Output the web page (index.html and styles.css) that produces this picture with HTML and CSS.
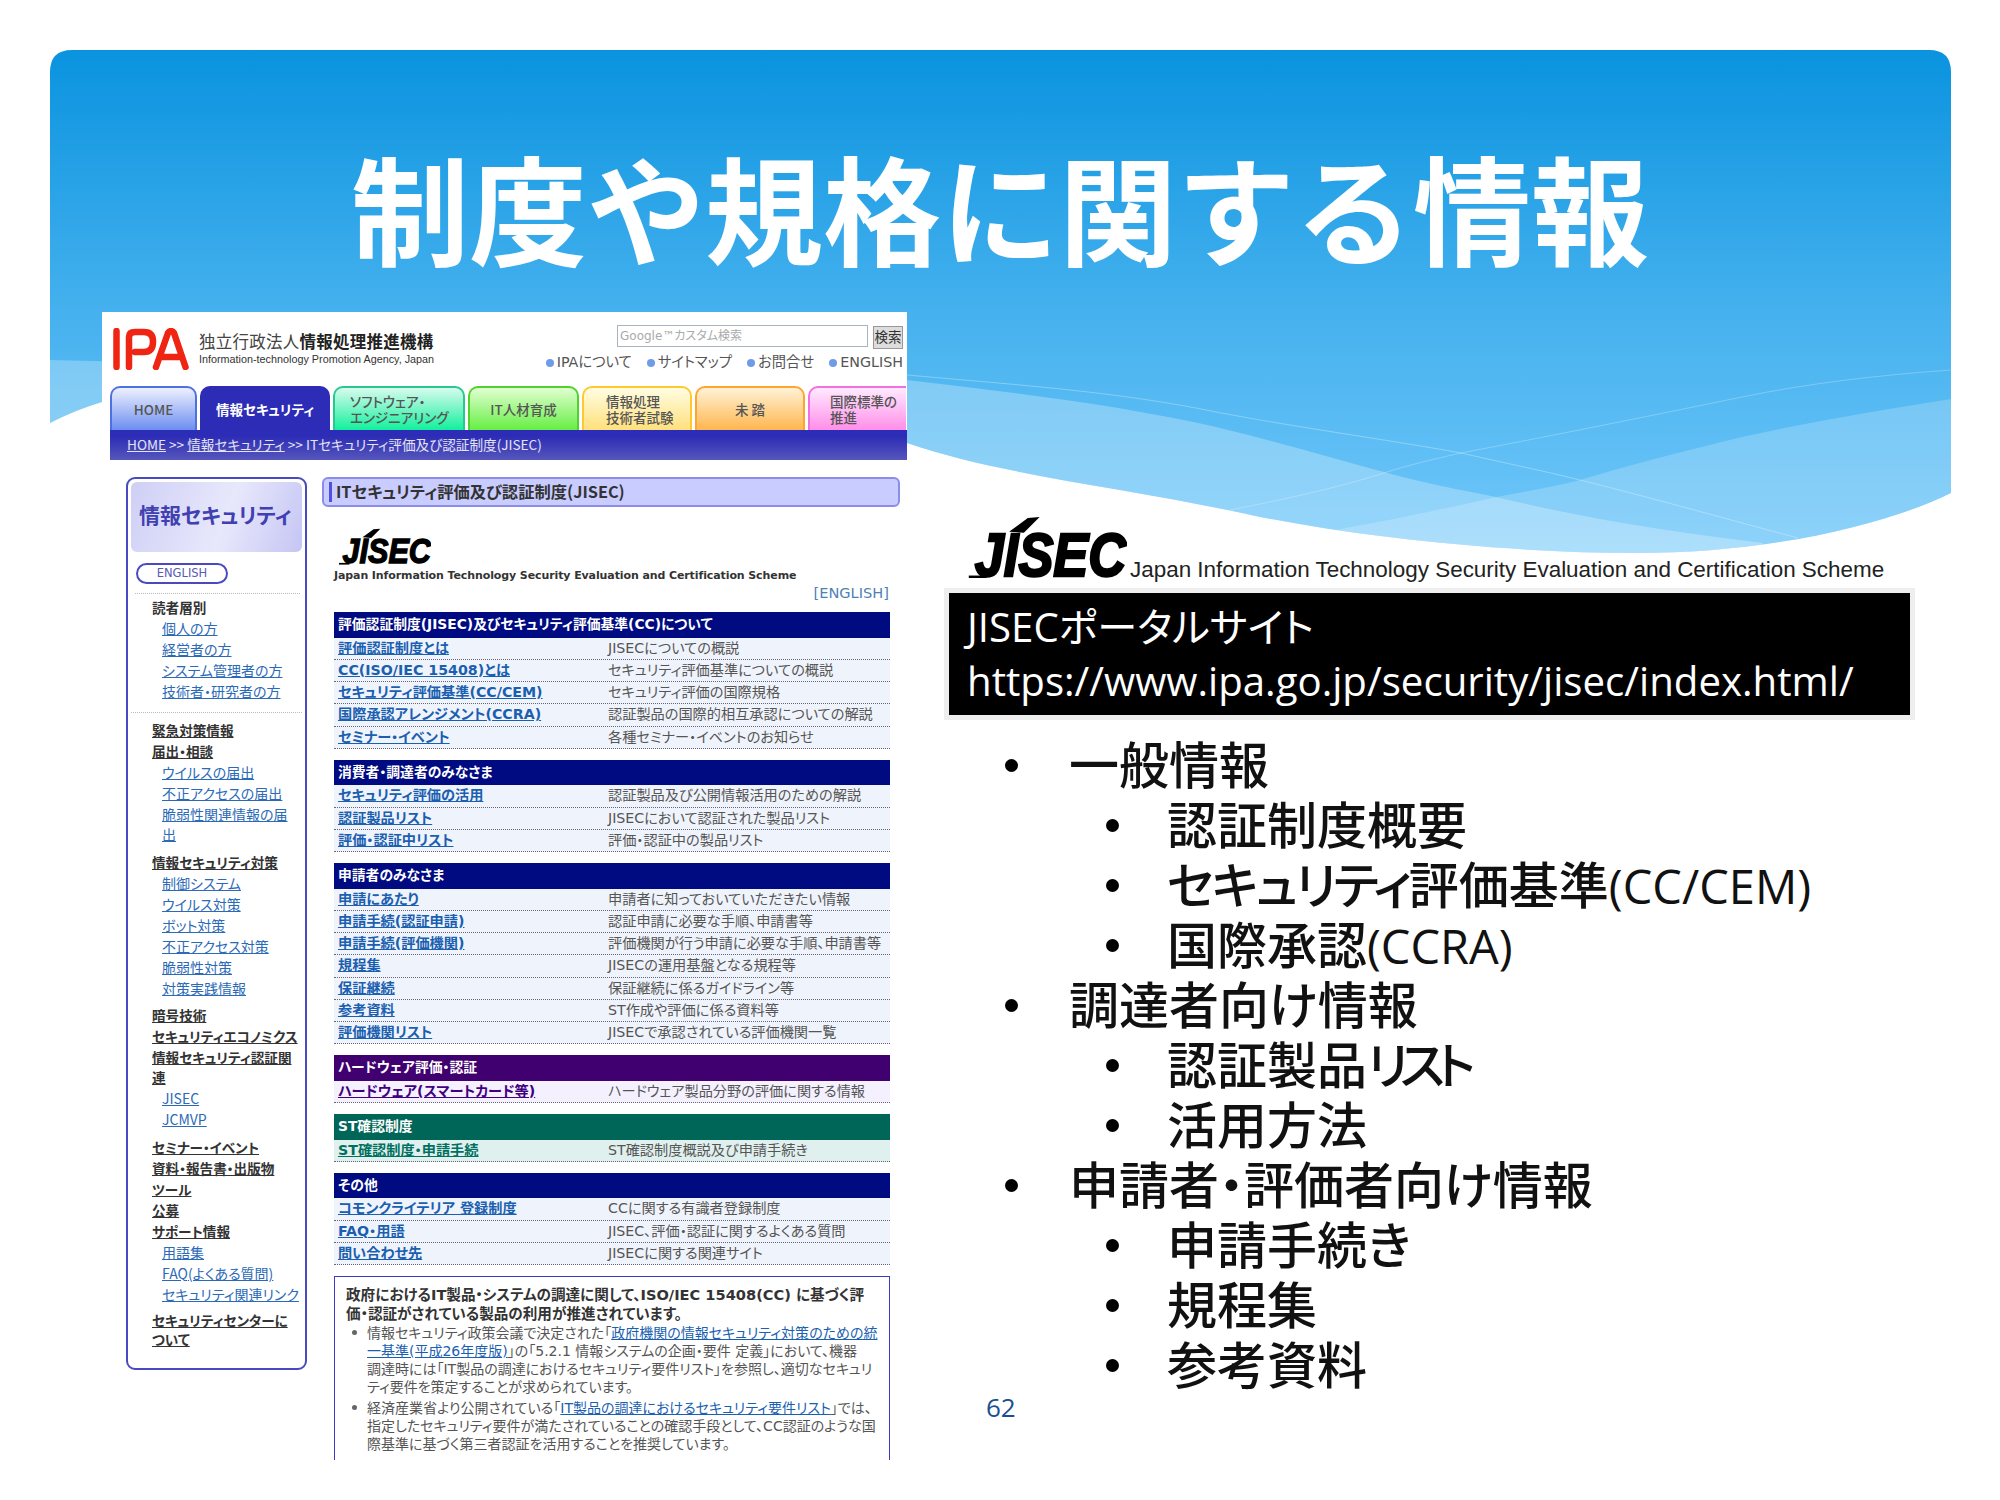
FILE: index.html
```html
<!DOCTYPE html>
<html lang="ja">
<head>
<meta charset="utf-8">
<title>制度や規格に関する情報</title>
<link rel="stylesheet" href="styles.css">
</head>
<body>
<div class="slide">
  <svg class="slide-bg" viewBox="0 0 2000 1500" width="2000" height="1500" aria-hidden="true">
    <defs>
      <linearGradient id="sky" gradientUnits="userSpaceOnUse" x1="0" y1="50" x2="0" y2="553">
        <stop offset="0" stop-color="#0a93df"/>
        <stop offset="0.52" stop-color="#45b1ee"/>
        <stop offset="1" stop-color="#72c8fa"/>
      </linearGradient>
      <clipPath id="wave"><path d="M50 72 Q50 50 72 50 H1929 Q1951 50 1951 72 V493 C1880 528 1760 553 1637 553 C1500 553 1340 535 1237 512 C1120 487 1000 475 907 443 C700 370 320 300 102 402 Q75 410 50 423 Z"/></clipPath>
    </defs>
    <g clip-path="url(#wave)">
      <rect x="50" y="50" width="1901" height="510" fill="url(#sky)"/>
      <path d="M50 360 L907 380 C1010 392 1120 405 1216 427 C1290 445 1340 460 1384 472 C1420 482 1460 490 1496 497 C1590 520 1680 533 1763 543 V600 H50 Z" fill="#fff" opacity="0.27"/>
      <path d="M1951 399 C1880 410 1810 422 1742 437 C1680 452 1630 465 1580 480 C1550 488 1520 492 1496 497 C1440 510 1390 520 1335 530 C1280 545 1230 560 1180 580 H1951 Z" fill="#fff" opacity="0.2"/>
      <path d="M907 375 C1020 385 1120 392 1216 412 C1300 428 1390 440 1461 453 C1500 462 1540 470 1580 480 C1660 500 1730 520 1798 538" fill="none" stroke="#fff" stroke-opacity="0.3"/>
      <path d="M1951 370 C1880 375 1810 383 1742 397 C1640 418 1540 438 1461 453 C1430 460 1405 466 1384 473 C1330 490 1280 500 1230 510" fill="none" stroke="#fff" stroke-opacity="0.25"/>
    </g>
  </svg>

  <h1 class="slide-title">制度や規格に関する情報</h1>

  <div class="slide-body">
    <div class="site">
      <header class="site-head">
        <div class="brand">
          <svg class="ipa-logo" viewBox="0 0 76 42" width="76" height="42" role="img" aria-label="IPA">
            <path d="M3.5 3V39M16 39V9Q16 4 22 4H31Q40 4 40 13.500Q40 24 31 24H22" fill="none" stroke="#f02412" stroke-width="6.500" stroke-linecap="round"/>
            <path d="M43 39L55 5Q58 1 61 5L72.500 39M50 29H66" fill="none" stroke="#f02412" stroke-width="6.500" stroke-linecap="round"/>
          </svg>
          <div class="brand-text">
            <div class="brand-ja">独立行政法人<b>情報処理推進機構</b></div>
            <div class="brand-en">Information-technology Promotion Agency, Japan</div>
          </div>
        </div>
        <div class="head-tools">
          <div class="search"><span class="search-box">Google™カスタム検索</span><span class="search-btn">検索</span></div>
          <ul class="util-links">
            <li>IPAについて</li><li>サイトマップ</li><li>お問合せ</li><li>ENGLISH</li>
          </ul>
        </div>
      </header>

      <nav class="tabs">
        <a class="tab tab-home">HOME</a>
        <a class="tab tab-sec">情報セキュリティ</a>
        <a class="tab tab-soft">ソフトウェア・<br>エンジニアリング</a>
        <a class="tab tab-it">IT人材育成</a>
        <a class="tab tab-exam">情報処理<br>技術者試験</a>
        <a class="tab tab-mito">未 踏</a>
        <a class="tab tab-intl">国際標準の<br>推進</a>
      </nav>
      <div class="crumbs"><u>HOME</u> &gt;&gt; <u>情報セキュリティ</u> &gt;&gt; ITセキュリティ評価及び認証制度(JISEC)</div>

      <div class="site-main">
        <aside class="side">
          <div class="side-title">情報セキュリティ</div>
          <div class="pill">ENGLISH</div>
          <div class="dots dots-a"></div>
          <div class="group">
            <div class="h h-plain">読者層別</div>
            <a class="l">個人の方</a>
            <a class="l">経営者の方</a>
            <a class="l">システム管理者の方</a>
            <a class="l">技術者・研究者の方</a>
          </div>
          <div class="dots dots-b"></div>
          <div class="group">
            <a class="h">緊急対策情報</a>
            <a class="h">届出・相談</a>
            <a class="l">ウイルスの届出</a>
            <a class="l">不正アクセスの届出</a>
            <a class="l">脆弱性関連情報の届<br>出</a>
          </div>
          <div class="group">
            <a class="h">情報セキュリティ対策</a>
            <a class="l">制御システム</a>
            <a class="l">ウイルス対策</a>
            <a class="l">ボット対策</a>
            <a class="l">不正アクセス対策</a>
            <a class="l">脆弱性対策</a>
            <a class="l">対策実践情報</a>
          </div>
          <div class="group">
            <a class="h">暗号技術</a>
            <a class="h">セキュリティエコノミクス</a>
            <a class="h">情報セキュリティ認証関<br>連</a>
            <a class="l">JISEC</a>
            <a class="l">JCMVP</a>
          </div>
          <div class="group">
            <a class="h">セミナー・イベント</a>
            <a class="h">資料・報告書・出版物</a>
            <a class="h">ツール</a>
            <a class="h">公募</a>
            <a class="h">サポート情報</a>
            <a class="l">用語集</a>
            <a class="l">FAQ(よくある質問)</a>
            <a class="l">セキュリティ関連リンク</a>
          </div>
          <div class="group">
            <a class="h h-wrap">セキュリティセンターに<br>ついて</a>
          </div>
        </aside>

        <main class="content">
          <h2 class="content-title">ITセキュリティ評価及び認証制度(JISEC)</h2>
          <div class="content-inner">
            <svg class="jisec-small" viewBox="0 0 160 62" width="92" height="37" role="img" aria-label="JISEC">
              <path d="M41 15L60 1L72 0L56 16Z" fill="#000"/>
              <path d="M0 61H18" stroke="#000" stroke-width="3"/>
              <text x="6" y="60" class="jisec-mark" textLength="154" lengthAdjust="spacingAndGlyphs">JISEC</text>
            </svg>
            <div class="tagline">Japan Information Technology Security Evaluation and Certification Scheme</div>
            <div class="english-link">[ENGLISH]</div>

            <section class="block">
              <h3>評価認証制度(JISEC)及びセキュリティ評価基準(CC)について</h3>
              <div class="row"><a>評価認証制度とは</a><span>JISECについての概説</span></div>
              <div class="row"><a>CC(ISO/IEC 15408)とは</a><span>セキュリティ評価基準についての概説</span></div>
              <div class="row"><a>セキュリティ評価基準(CC/CEM)</a><span>セキュリティ評価の国際規格</span></div>
              <div class="row"><a>国際承認アレンジメント(CCRA)</a><span>認証製品の国際的相互承認についての解説</span></div>
              <div class="row"><a>セミナー・イベント</a><span>各種セミナー・イベントのお知らせ</span></div>
            </section>
            <section class="block">
              <h3>消費者・調達者のみなさま</h3>
              <div class="row"><a>セキュリティ評価の活用</a><span>認証製品及び公開情報活用のための解説</span></div>
              <div class="row"><a>認証製品リスト</a><span>JISECにおいて認証された製品リスト</span></div>
              <div class="row"><a>評価・認証中リスト</a><span>評価・認証中の製品リスト</span></div>
            </section>
            <section class="block">
              <h3>申請者のみなさま</h3>
              <div class="row"><a>申請にあたり</a><span>申請者に知っておいていただきたい情報</span></div>
              <div class="row"><a>申請手続(認証申請)</a><span>認証申請に必要な手順、申請書等</span></div>
              <div class="row"><a>申請手続(評価機関)</a><span>評価機関が行う申請に必要な手順、申請書等</span></div>
              <div class="row"><a>規程集</a><span>JISECの運用基盤となる規程等</span></div>
              <div class="row"><a>保証継続</a><span>保証継続に係るガイドライン等</span></div>
              <div class="row"><a>参考資料</a><span>ST作成や評価に係る資料等</span></div>
              <div class="row"><a>評価機関リスト</a><span>JISECで承認されている評価機関一覧</span></div>
            </section>
            <section class="block block-hw">
              <h3>ハードウェア評価・認証</h3>
              <div class="row"><a>ハードウェア(スマートカード等)</a><span>ハードウェア製品分野の評価に関する情報</span></div>
            </section>
            <section class="block block-st">
              <h3>ST確認制度</h3>
              <div class="row"><a>ST確認制度・申請手続</a><span>ST確認制度概説及び申請手続き</span></div>
            </section>
            <section class="block">
              <h3>その他</h3>
              <div class="row"><a>コモンクライテリア 登録制度</a><span>CCに関する有識者登録制度</span></div>
              <div class="row"><a>FAQ・用語</a><span>JISEC、評価・認証に関するよくある質問</span></div>
              <div class="row"><a>問い合わせ先</a><span>JISECに関する関連サイト</span></div>
            </section>

            <section class="notice">
              <p class="notice-lead">政府におけるIT製品・システムの調達に関して、ISO/IEC 15408(CC) に基づく評<br>価・認証がされている製品の利用が推進されています。</p>
              <ul>
                <li>情報セキュリティ政策会議で決定された「<a>政府機関の情報セキュリティ対策のための統<br>一基準(平成26年度版)</a>」の「5.2.1 情報システムの企画・要件 定義」において、機器<br>調達時には「IT製品の調達におけるセキュリティ要件リスト」を参照し、適切なセキュリ<br>ティ要件を策定することが求められています。</li>
                <li>経済産業省より公開されている「<a>IT製品の調達におけるセキュリティ要件リスト</a>」では、<br>指定したセキュリティ要件が満たされていることの確認手段として、CC認証のような国<br>際基準に基づく第三者認証を活用することを推奨しています。</li>
              </ul>
            </section>
          </div>
        </main>
      </div>
    </div>

    <div class="right">
      <div class="jisec-line">
        <svg class="jisec-big" viewBox="0 0 160 62" width="159" height="61" role="img" aria-label="JISEC">
          <path d="M41 15L60 1L72 0L56 16Z" fill="#000"/>
          <path d="M0 61H18" stroke="#000" stroke-width="3"/>
          <text x="6" y="60" class="jisec-mark" textLength="154" lengthAdjust="spacingAndGlyphs">JISEC</text>
        </svg>
        <span class="jisec-name">Japan Information Technology Security Evaluation and Certification Scheme</span>
      </div>
      <div class="portal">
        <div class="portal-line">JISECポータルサイト</div>
        <div class="portal-line">https://www.ipa.go.jp/security/jisec/index.html/</div>
      </div>
      <ul class="topics">
        <li class="t1">一般情報</li>
        <li class="t2">認証制度概要</li>
        <li class="t2"><span class="tight-a">セキュリティ</span>評価基準<span class="latin">(CC/CEM)</span></li>
        <li class="t2">国際承認<span class="latin">(CCRA)</span></li>
        <li class="t1">調達者向け情報</li>
        <li class="t2">認証製品<span class="tight-b">リスト</span></li>
        <li class="t2">活用方法</li>
        <li class="t1">申請者・評価者向け情報</li>
        <li class="t2">申請手続き</li>
        <li class="t2">規程集</li>
        <li class="t2">参考資料</li>
      </ul>
      <div class="page-no">62</div>
    </div>
  </div>
</div>
</body>
</html>
```

FILE: styles.css
```css
* { box-sizing: border-box; }
html, body { margin: 0; padding: 0; background: #fff; }
body { font-family: "Noto Sans CJK JP", sans-serif; }
h1, h2, h3, p, ul { margin: 0; padding: 0; }
ul { list-style: none; }

.slide { position: relative; width: 2000px; height: 1500px; overflow: hidden; background: #fff; }
.slide-bg { position: absolute; left: 0; top: 0; }

.slide-title {
  position: relative;
  height: 312px;
  padding-top: 126px;
  font-size: 118px;
  line-height: 160px;
  font-weight: 700;
  color: #fff;
  text-align: center;
  white-space: nowrap;
}

.slide-body { position: relative; display: flex; align-items: flex-start; }

/* ---- embedded web page ---- */
.site {
  width: 805px;
  height: 1148px;
  margin-left: 102px;
  overflow: hidden;
  background: #fff;
  font-family: "DejaVu Sans", "Noto Sans CJK JP", sans-serif;
  font-feature-settings: "palt";
  font-size: 14.2px;
  color: #444;
}
.site-head { display: flex; justify-content: space-between; height: 74px; padding: 13px 4px 0 11px; }
.brand { display: flex; gap: 10px; align-items: flex-start; padding-top: 3px; }
.ipa-logo { display: block; }
.brand-text { padding-top: 2px; }
.brand-ja { font-family: "Noto Sans CJK JP", sans-serif; font-size: 16.5px; line-height: 23px; color: #444; white-space: nowrap; letter-spacing: .25px; }
.brand-ja b { color: #222; }
.brand-en { font-family: "Liberation Sans", sans-serif; font-size: 10.8px; line-height: 13px; color: #333; white-space: nowrap; }
.head-tools { display: flex; flex-direction: column; align-items: flex-end; }
.search { display: flex; gap: 5px; height: 23px; }
.search-box { width: 251px; height: 22px; border: 1px solid #a7b5c2; padding-left: 2px; font-size: 12px; line-height: 20px; color: #aaa; }
.search-btn { width: 30px; height: 23px; margin-top: 1px; background: #ddd; border: 1px solid #999; font-size: 13.5px; line-height: 21px; text-align: center; color: #333; white-space: nowrap; }
.util-links { display: flex; gap: 15px; margin-top: 4px; font-size: 14.3px; line-height: 20px; color: #555; white-space: nowrap; }
.util-links li::before { content: ""; display: inline-block; width: 8px; height: 8px; margin-right: 3px; border-radius: 50%; background: #6f9be8; }

.tabs { display: flex; gap: 3px; height: 44px; margin-left: 8px; }
.tab {
  display: flex; align-items: center; justify-content: center;
  height: 44px;
  border: 2px solid; border-bottom: 0; border-radius: 10px 10px 0 0;
  font-family: "Noto Sans CJK JP", sans-serif;
  font-size: 13.5px; line-height: 16px; font-weight: 500; color: #555; white-space: nowrap;
}
.tab-home { width: 87px; border-color: #4f70e0; background: linear-gradient(#eef0ff, #6c8ef0); }
.tab-sec { width: 130px; border-color: #2c2cb6; background: #2c2cb6; color: #fff; font-weight: 700; }
.tab-soft { width: 132px; border-color: #28c890; background: linear-gradient(#d8fbee, #12f09c); justify-content: flex-start; padding-left: 15px; }
.tab-it { width: 111px; border-color: #52d030; background: linear-gradient(#e0ffd0, #66ee44); }
.tab-exam { width: 110px; border-color: #ffc830; background: linear-gradient(#fffde2, #ffe07c); justify-content: flex-start; padding-left: 22px; }
.tab-mito { width: 110px; border-color: #ffa52e; background: linear-gradient(#fff2d6, #ffb64e); }
.tab-intl { width: 98px; flex: none; border-color: #f070e0; border-right: 0; border-radius: 10px 0 0 0; background: linear-gradient(#ffeaff, #ff8ee8); justify-content: flex-start; padding-left: 20px; }

.crumbs {
  height: 30px; margin-left: 8px; padding-left: 17px;
  background: linear-gradient(#2c2cb6 20%, #5656bc);
  font-family: "Noto Sans CJK JP", sans-serif;
  font-size: 13.6px; line-height: 28px; color: #e4e4f4; white-space: nowrap;
}

.site-main { display: flex; gap: 15px; margin-top: 17px; padding-left: 24px; }

.side {
  flex: none; width: 181px; height: 893px;
  padding: 3px;
  border: 2px solid #4a4ac0; border-radius: 9px;
  font-family: "Noto Sans CJK JP", sans-serif;
  font-size: 14px;
}
.side-title {
  height: 70px; padding-left: 8px;
  border-radius: 6px;
  background: linear-gradient(110deg, #cfcff6, #e8e8fc 55%, #c5c5f4);
  font-size: 21px; font-weight: 700; line-height: 64px; color: #4040b0; white-space: nowrap;
}
.pill {
  width: 92px; height: 21px; margin: 11px 0 0 5px;
  border: 2px solid #4a4ac0; border-radius: 11px;
  font-family: "DejaVu Sans", sans-serif;
  font-size: 11.5px; line-height: 17px; text-align: center; color: #5a5ab8;
}
.dots { height: 0; border-top: 1px dotted #bbb; }
.dots-a { margin: 9px 2px 3px 4px; }
.dots-b { margin: 10px 0 7px 0; }
.group { padding-left: 21px; margin-bottom: 6.5px; }
.h, .l { display: block; padding-bottom: 1px; line-height: 20px; white-space: nowrap; text-decoration: underline; }
.h { font-size: 13.6px; font-weight: 700; color: #333; }
.h-plain { text-decoration: none; }
.h-wrap { line-height: 19px; }
.l { padding-left: 10px; color: #2b6ab8; }

.content { width: 578px; flex: none; }
.content-title {
  position: relative;
  height: 30px; padding-left: 12px;
  background: #c9ccff;
  border: 2px solid #8c8cea; border-radius: 6px;
  font-family: "Noto Sans CJK JP", sans-serif;
  font-size: 16.3px; font-weight: 700; line-height: 25px; color: #333; white-space: nowrap;
}
.content-title::before { content: ""; position: absolute; left: 5px; top: 3px; bottom: 3px; width: 3px; background: #5050e0; }
.content-inner { padding: 0 10px 0 12px; }
.jisec-small { display: block; margin: 21px 0 0 5px; }
.jisec-mark { font-family: "Liberation Sans", sans-serif; font-style: italic; font-weight: 700; font-size: 62px; fill: #000; stroke: #000; stroke-width: 2.5px; }
.tagline { font-family: "DejaVu Sans", sans-serif; font-weight: 700; font-size: 11px; line-height: 16px; margin-top: 3px; color: #333; white-space: nowrap; letter-spacing: -.1px; }
.english-link { font-size: 14.6px; line-height: 18px; text-align: right; color: #4d82b4; margin: 0 1px 0 0; }

.block { margin-top: 11px; }
.english-link + .block { margin-top: 10px; }
.block h3 {
  height: 25.5px; padding-left: 4px;
  background: #000b82;
  font-family: "DejaVu Sans", "Noto Sans CJK JP", sans-serif;
  font-size: 13.8px; font-weight: 700; line-height: 25px; color: #fff; white-space: nowrap;
}
.row {
  display: flex; height: 22.25px;
  padding-left: 4px;
  background: #eff3fb;
  border-bottom: 1px dotted #667;
  line-height: 21px; white-space: nowrap;
}
.row a { flex: none; width: 270px; font-weight: 700; color: #1a5fb0; text-decoration: underline; }
.row span { color: #555; }
.block-hw h3 { background: #41006f; }
.block-hw .row { background: #f4f0fe; }
.block-hw .row a { color: #41007f; }
.block-st h3 { background: #006658; }
.block-st .row { background: #e0f0ee; }
.block-st .row a { color: #007060; }

.notice {
  height: 190px; margin-top: 11px; padding: 8px 8px 0 11px;
  border: 1px solid #3a3ac8; border-bottom: 0;
  white-space: nowrap;
}
.notice-lead { font-size: 14.6px; font-weight: 700; line-height: 19px; color: #333; }
.notice ul { margin-top: 1px; padding-left: 21px; }
.notice li { position: relative; font-size: 14px; line-height: 18px; margin-bottom: 3px; color: #555; }
.notice li::before { content: ""; position: absolute; left: -15px; top: 6px; width: 5px; height: 5px; border-radius: 50%; background: #666; }
.notice a { color: #1a5fb0; text-decoration: underline; }

/* ---- right column ---- */
.right { flex: none; width: 1093px; padding-top: 205px; }
.jisec-line { display: flex; align-items: flex-end; gap: 3px; height: 61px; margin-left: 61px; }
.jisec-big { display: block; flex: none; }
.jisec-name { font-family: "Liberation Sans", sans-serif; font-size: 22.45px; line-height: 26px; color: #222; white-space: nowrap; margin-bottom: -5px; }
.portal {
  width: 971px; height: 132px; margin: 10px 0 0 37px;
  padding: 7px 0 0 18px;
  background: #000;
  border: 5px solid #eee;
  font-family: "Open Sans", "Noto Sans CJK JP", sans-serif;
  font-feature-settings: "palt";
  font-size: 40.2px; line-height: 54px; color: #fff; white-space: nowrap;
}
.portal-line { height: 54px; }
.topics {
  margin-top: 15px;
  font-family: "Open Sans", "Noto Sans CJK JP", sans-serif;
  font-feature-settings: "palt";
  font-size: 50px; line-height: 60px; color: #111; white-space: nowrap;
}
.topics li { position: relative; height: 60px; }
.topics li::before { content: ""; position: absolute; top: 24px; width: 13px; height: 13px; border-radius: 50%; background: #000; }
.t1 { padding-left: 162px; font-weight: 500; }
.t1::before { left: 98px; }
.t2 { padding-left: 260px; font-weight: 500; }
.t2::before { left: 199px; }
.latin { font-size: 47px; }
.tight-a { letter-spacing: -2.8px; }
.tight-b { letter-spacing: -8px; }
.page-no { margin: -6px 0 0 79px; font-family: "Open Sans", sans-serif; font-size: 26px; line-height: 36px; color: #1a4f8f; }
```
